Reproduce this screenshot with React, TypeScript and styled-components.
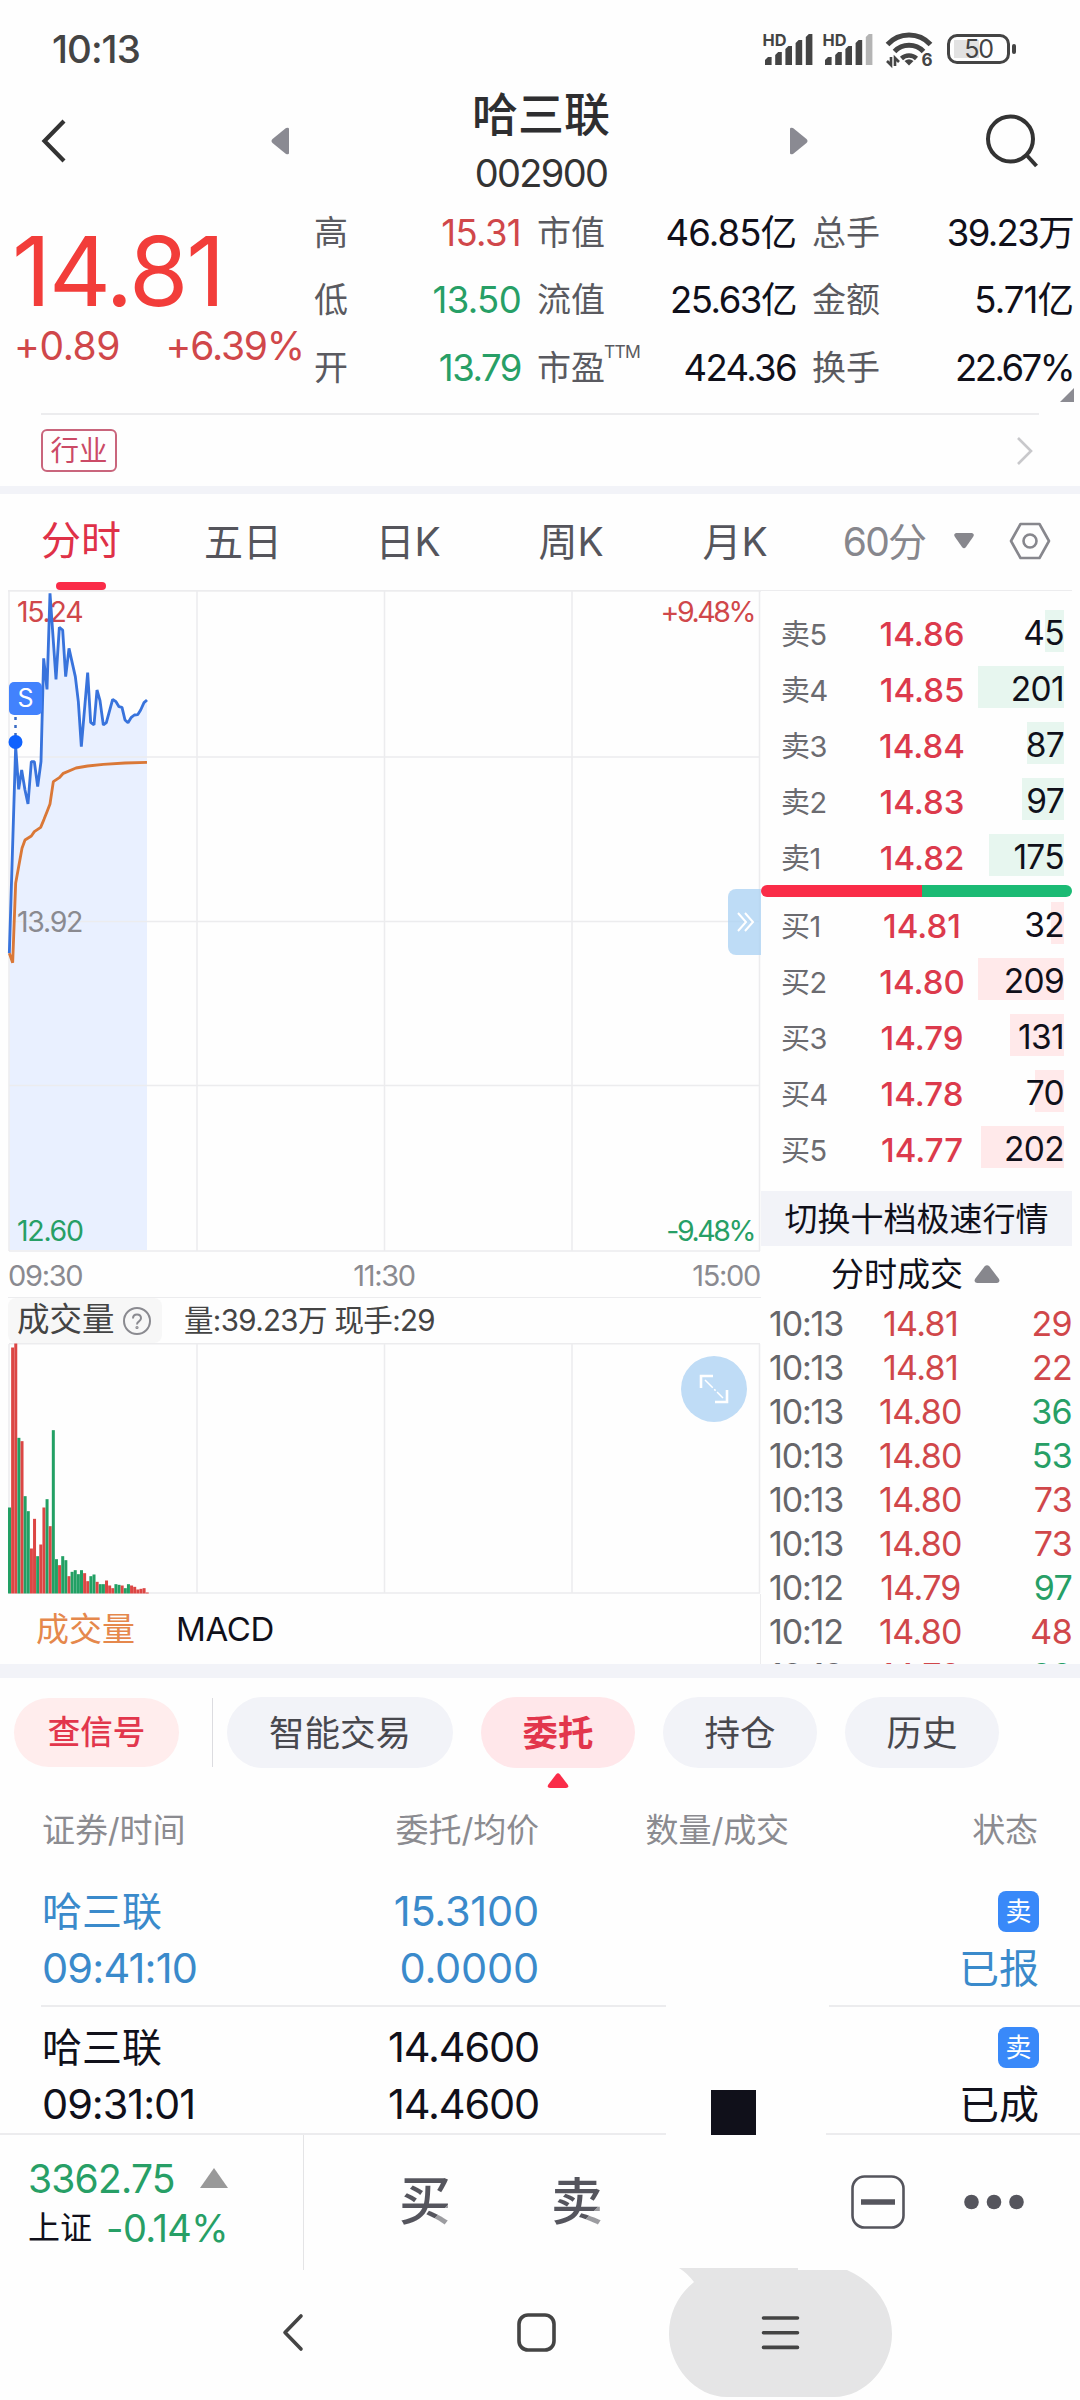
import React from "react";
import styled, { createGlobalStyle } from "styled-components";

const RED = "#d0474a";
const GREEN = "#279f66";
const INK = "#10101a";
const HAIR = "#ececee";
const BAND = "#f2f3f8";

const GlobalStyle = createGlobalStyle`
  * { box-sizing: border-box; }
  body { margin: 0; background: #fefefe; }
  svg { display: block; flex: none; overflow: visible; }
`;

const Screen = styled.div`
  width: 1080px;
  height: 2400px;
  overflow: hidden;
  display: flex;
  flex-direction: column;
  background: #fefefe;
  font-family: Inter, "Noto Sans CJK SC", sans-serif;
  line-height: 1;
  white-space: nowrap;
  color: ${INK};
`;

const Text = styled.span<{ $size: number; $color?: string; $weight?: number; $ls?: number; $lh?: number }>`
  font-size: ${(p) => p.$size}px;
  color: ${(p) => p.$color ?? "inherit"};
  font-weight: ${(p) => p.$weight ?? 400};
  letter-spacing: ${(p) => p.$ls ?? -0.045}em;
  line-height: ${(p) => (p.$lh ? p.$lh + "px" : 1)};
`;

/* ---------- status bar ---------- */
const StatusBar = styled.div`
  flex: none;
  height: 85px;
  padding: 13px 64px 0 52px;
  display: flex;
  align-items: center;
  justify-content: space-between;
  color: #444;
`;
const StatusIcons = styled.div`
  display: flex;
  align-items: center;
  gap: 12px;
`;
const Signals = styled.div`
  display: flex;
  gap: 10px;
`;
const BatteryBox = styled.div`
  width: 63px;
  height: 30px;
  border: 3px solid #444;
  border-radius: 10px;
  padding: 3px 4px;
  display: flex;
  align-items: center;
  justify-content: center;
  background: linear-gradient(#e2e2e2, #e2e2e2) 4px 50% / 25px 18px no-repeat;
`;
const Battery = styled.div`
  display: flex;
  align-items: center;
  gap: 2px;
  margin-left: 2px;
  &::after {
    content: "";
    width: 4px;
    height: 10px;
    border-radius: 2px;
    background: #444;
  }
`;

const Signal = ({ weak }: { weak?: boolean }) => (
  <svg width="50" height="34" viewBox="0 0 50 34">
    <text x="-0.500" y="13.500" fontSize="16.500" fontWeight="700" fill="#444" textLength="24" lengthAdjust="spacingAndGlyphs">HD</text>
    {[8, 13, 19, 25, 31].map((h, i) => (
      <path
        key={h}
        d={`M${2 + i * 10.2} 33V${36 - h}l3 -3h3.6V33z`}
        fill={weak && i === 4 ? "#b4b4b4" : "#444"}
      />
    ))}
  </svg>
);

const Wifi = () => (
  <svg width="48" height="36" viewBox="0 0 48 36" fill="none" stroke="#444" strokeWidth="5">
    <path d="M2.500 13.500a29 29 0 0 1 43 0" />
    <path d="M9.500 20.500a20 20 0 0 1 29 0" />
    <path d="M16.500 27.500a11 11 0 0 1 15 0" strokeWidth="4.500" />
    <path d="M24 34.500l-4.500-4.500q4.500-3.500 9 0z" fill="#444" stroke="none" />
    <path d="M6 26v8l-4-4M10 35v-8l4 4" strokeWidth="2.600" />
    <text x="36.500" y="35" fontSize="17" fontWeight="700" fill="#444" stroke="none">6</text>
  </svg>
);

/* ---------- stock header ---------- */
const Header = styled.header`
  flex: none;
  height: 111px;
  padding: 0 40px 0 42px;
  display: grid;
  grid-template-columns: 250px 1fr 250px;
  align-items: center;
`;
const HeaderSide = styled.div<{ $inset?: number }>`
  display: flex;
  align-items: center;
  justify-content: space-between;
  padding-right: ${(p) => p.$inset ?? 0}px;
`;
const TitleColumn = styled.div`
  display: flex;
  flex-direction: column;
  align-items: center;
  gap: 8px;
`;

/* ---------- quote ---------- */
const Quote = styled.section`
  position: relative;
  flex: none;
  height: 217px;
  display: flex;
`;
const PriceColumn = styled.div`
  width: 315px;
  padding: 25px 0 0 12px;
  display: flex;
  flex-direction: column;
`;
const ChangeRow = styled.div`
  display: flex;
  justify-content: space-between;
  padding: 0 11px 0 2px;
`;
const StatGrid = styled.div`
  display: grid;
  grid-template-columns: 207px 259px 261px;
  grid-auto-rows: 67.5px;
  column-gap: 16px;
  padding-top: 3px;
  margin-left: -1px;
`;
const StatCell = styled.div`
  display: flex;
  align-items: center;
  justify-content: space-between;
`;
const Superscript = styled.sup`
  font-size: 17.5px;
  line-height: 0;
  vertical-align: 22px;
  letter-spacing: -0.8px;
  margin-left: -1px;
`;
const Corner = styled.i`
  position: absolute;
  right: 6px;
  bottom: 11px;
  border-left: 14px solid transparent;
  border-bottom: 14px solid #8b8b92;
`;
const IndustryRow = styled.div`
  flex: none;
  height: 73px;
  margin: 0 41px;
  padding-right: 5px;
  border-top: 2px solid ${HAIR};
  display: flex;
  align-items: center;
  justify-content: space-between;
`;
const IndustryTag = styled.span`
  width: 76px;
  height: 43px;
  padding-top: 2px;
  display: flex;
  align-items: center;
  justify-content: center;
  border: 2px solid #c9657c;
  border-radius: 6px;
  color: #cb4a66;
  font-size: 28.5px;
`;
const Band = styled.div<{ $h: number }>`
  flex: none;
  height: ${(p) => p.$h}px;
  background: ${BAND};
`;

const stats: [string, string, string, number][] = [
  ["高", "15.31", RED, -0.018],
  ["市值", "46.85亿", INK, -0.025],
  ["总手", "39.23万", INK, -0.045],
  ["低", "13.50", GREEN, -0.018],
  ["流值", "25.63亿", INK, -0.04],
  ["金额", "5.71亿", INK, -0.025],
  ["开", "13.79", GREEN, -0.04],
  ["市盈", "424.36", INK, -0.045],
  ["换手", "22.67%", INK, -0.07],
];

/* ---------- period tabs ---------- */
const PeriodTabs = styled.nav`
  flex: none;
  height: 96px;
  display: grid;
  grid-template-columns: 162px 162px 168px 158px 170px 128px 32px 1fr;
`;
const PeriodTab = styled.div<{ $active?: boolean }>`
  position: relative;
  display: flex;
  align-items: center;
  justify-content: center;
  padding-bottom: 2px;
  font-size: ${(p) => (p.$active ? 40 : 39)}px;
  color: ${(p) => (p.$active ? "#df3148" : "#55555c")};
  ${(p) =>
    p.$active &&
    `&::after {
      content: "";
      position: absolute;
      left: 56px;
      bottom: 0;
      width: 50px;
      height: 8px;
      border-radius: 4px;
      background: #fa2c48;
    }`}
`;

/* ---------- chart area ---------- */
const Market = styled.main`
  flex: none;
  height: 1074px;
  display: flex;
  overflow: hidden;
`;
const ChartColumn = styled.div`
  width: 761px;
  display: flex;
  flex-direction: column;
`;
const ChartFrame = styled.div`
  position: relative;
`;
const ChartLabel = styled.span<{ $top: number; $right?: boolean; $color: string }>`
  position: absolute;
  top: ${(p) => p.$top}px;
  ${(p) => (p.$right ? "right: 7px;" : "left: 17px;")}
  font-size: 28.5px;
  line-height: 30px;
  letter-spacing: ${(p) => (p.$right ? -0.085 : -0.045)}em;
  color: ${(p) => p.$color};
`;
const SellMark = styled.span`
  position: absolute;
  left: 9px;
  top: 92px;
  width: 33px;
  height: 33px;
  border-radius: 5px;
  background: #4282fd;
  color: #fff;
  font-size: 25px;
  display: flex;
  align-items: center;
  justify-content: center;
`;
const ExpandTab = styled.span`
  position: absolute;
  right: 0;
  top: 299px;
  width: 33px;
  height: 66px;
  padding-left: 2px;
  border-radius: 8px 0 0 8px;
  background: rgba(170, 209, 243, 0.76);
  display: flex;
  align-items: center;
  justify-content: center;
`;
const TimeAxis = styled.div`
  height: 45px;
  padding: 2px 1px 0 8px;
  display: grid;
  grid-template-columns: 1fr auto 1fr;
  align-items: center;
  color: #8a8a90;
  > :last-child { justify-self: end; }
`;
const VolumeInfo = styled.div`
  height: 46px;
  margin-left: 8px;
  border-top: 1px solid ${HAIR};
  display: flex;
  align-items: center;
  gap: 22px;
  color: #444;
`;
const VolumeName = styled.div`
  width: 154px;
  height: 45px;
  padding-left: 9px;
  border-radius: 8px;
  background: #f7f7f7;
  display: flex;
  align-items: center;
  gap: 8px;
`;
const FullscreenButton = styled.span`
  position: absolute;
  right: 14px;
  top: 13px;
  width: 66px;
  height: 66px;
  border-radius: 50%;
  background: #bfdcf6;
  display: flex;
  align-items: center;
  justify-content: center;
`;
const IndicatorTabs = styled.div`
  height: 70px;
  padding: 1px 0 0 36px;
  border-right: 1px solid ${HAIR};
  display: flex;
  align-items: center;
  gap: 41px;
`;

const priceLine =
  "28,1120 47,500 56,628 65,570 75,630 84,672 94,545 103,545 113,620 123,545 131,235 141,328 150,40 168,298 178,142 188,150 197,290 207,205 226,290 235,365 244,500 263,278 272,427 282,435 291,330 300,362 310,435 319,428 338,358 348,365 357,380 366,382 375,420 384,428 394,412 403,405 413,404 422,390 432,368 441,360";
const averageLine =
  "28,1120 38,1148 47,910 66,805 75,780 94,768 103,755 122,742 132,718 141,695 150,672 160,605 178,593 190,580 228,564 263,558 310,553 375,549 441,547";

const PriceChart = () => (
  <svg width="761" height="662" viewBox="0 0 761 662" fill="none">
    <g transform="translate(0 -10) scale(0.33333)">
      <polygon points={`28,2010 ${priceLine} 441,2010`} fill="#e9f0ff" />
    </g>
    <path d="M8 .7H761" stroke={HAIR} strokeWidth="2" />
    <path d="M9 661H760M9 1V661M197 1V661M384.500 1V661M572 1V661M759.500 1V661M9 167H760M9 331.500H760M9 495.500H760" stroke={HAIR} strokeWidth="1.500" />
  </svg>
);
const PriceLines = styled.svg`
  position: absolute;
  left: 0;
  top: 0;
`;

const volumes =
  "258g 738r 750r 467g 457r 292g 247g 135r 224r 112g 147r 258r 283g 202r 490g 103g 85r 112g 100g 52r 65g 70g 58g 70g 61r 37r 52g 57g 35r 28g 28g 39r 24r 16r 28g 26g 24r 16g 28g 24r 20r 12r 14r 16r 3r".split(" ");

const VolumeChart = () => (
  <svg width="761" height="251" viewBox="0 0 761 251" fill="none">
    <path d="M9 .7H760M9 250H760M9 1V250M197 1V250M384.500 1V250M572 1V250M759.500 1V250" stroke={HAIR} strokeWidth="1.500" />
    {volumes.map((v, i) => {
      const h = parseInt(v, 10) / 3;
      return (
        <rect key={i} x={8 + i * 3.13} y={250.5 - h} width={3} height={h} fill={v.endsWith("r") ? "#dc4644" : "#22a064"} />
      );
    })}
  </svg>
);

/* ---------- order book ---------- */
const BookColumn = styled.aside`
  width: 311px;
  border-top: 1px solid ${HAIR};
  padding-top: 15px;
  display: flex;
  flex-direction: column;
`;
const BookRow = styled.div`
  flex: none;
  height: 56px;
  padding: 0 8px 0 20px;
  display: grid;
  grid-template-columns: 80px 117px 1fr;
  align-items: center;
`;
const Centered = styled.div<{ $shift?: number }>`
  display: flex;
  justify-content: center;
  padding-left: ${(p) => p.$shift ?? 0}px;
`;
const Quantity = styled.div<{ $bar: number; $fill: string }>`
  height: 48px;
  display: flex;
  align-items: center;
  justify-content: flex-end;
  background: linear-gradient(${(p) => p.$fill}, ${(p) => p.$fill}) 100% 0 / ${(p) => p.$bar}px 42px no-repeat;
`;
const Ratio = styled.div`
  flex: none;
  height: 12px;
  margin: -1px 0 1px;
  border-radius: 6px;
  background: linear-gradient(90deg, #fa2c48 161px, #1bba74 161px);
`;
const DepthSwitch = styled.div`
  flex: none;
  height: 55px;
  margin-top: 13px;
  padding-top: 1px;
  background: ${BAND};
  display: flex;
  align-items: center;
  justify-content: center;
`;
const TradesTitle = styled.div`
  flex: none;
  height: 56px;
  padding-left: 70px;
  display: flex;
  align-items: center;
  gap: 11px;
`;
const TradeRow = styled.div`
  flex: none;
  height: 44px;
  padding-left: 8px;
  display: grid;
  grid-template-columns: 90px 123px 1fr;
  align-items: center;
`;
const RightAligned = styled.div`
  display: flex;
  justify-content: flex-end;
`;

type Level = [string, string, string, number];
const asks: Level[] = [
  ["卖5", "14.86", "45", 19],
  ["卖4", "14.85", "201", 86],
  ["卖3", "14.84", "87", 37],
  ["卖2", "14.83", "97", 42],
  ["卖1", "14.82", "175", 75],
];
const bids: Level[] = [
  ["买1", "14.81", "32", 13],
  ["买2", "14.80", "209", 86],
  ["买3", "14.79", "131", 54],
  ["买4", "14.78", "70", 29],
  ["买5", "14.77", "202", 83],
];
const trades: [string, string, string, string][] = [
  ["10:13", "14.81", "29", RED],
  ["10:13", "14.81", "22", RED],
  ["10:13", "14.80", "36", GREEN],
  ["10:13", "14.80", "53", GREEN],
  ["10:13", "14.80", "73", RED],
  ["10:13", "14.80", "73", RED],
  ["10:12", "14.79", "97", GREEN],
  ["10:12", "14.80", "48", RED],
  ["10:12", "14.79", "20", GREEN],
];

const Levels = ({ rows, fill }: { rows: Level[]; fill: string }) => (
  <>
    {rows.map(([name, price, qty, bar]) => (
      <BookRow key={name}>
        <Text $size={29} $color="#6b6b70" $ls={-0.02}>{name}</Text>
        <Centered $shift={5}>
          <Text $size={33} $color="#dc3a4c" $ls={0} $weight={450}>{price}</Text>
        </Centered>
        <Quantity $bar={bar} $fill={fill}>
          <Text $size={33.5} $ls={-0.02}>{qty}</Text>
        </Quantity>
      </BookRow>
    ))}
  </>
);

/* ---------- orders ---------- */
const PillRow = styled.div`
  flex: none;
  height: 122px;
  padding: 19px 0 0 14px;
  display: flex;
  align-items: flex-start;
`;
const Pill = styled.div<{ $w: number; $gap?: number; $tone?: "soft" | "active" }>`
  position: relative;
  width: ${(p) => p.$w}px;
  height: ${(p) => (p.$tone === "soft" ? 69 : 71)}px;
  margin: ${(p) => (p.$tone === "soft" ? 1 : 0)}px 0 0 ${(p) => p.$gap ?? 28}px;
  padding-top: 2px;
  border-radius: 36px;
  display: flex;
  align-items: center;
  justify-content: center;
  font-size: ${(p) => (p.$tone === "soft" ? 32.5 : 35.5)}px;
  font-weight: ${(p) => (p.$tone === "active" ? 700 : p.$tone === "soft" ? 500 : 400)};
  color: ${(p) => (p.$tone ? "#e2364c" : "#48484e")};
  background: ${(p) => (p.$tone === "soft" ? "#ffeded" : p.$tone === "active" ? "#ffe7ea" : BAND)};
`;
const Separator = styled.i`
  width: 1px;
  height: 69px;
  margin: 1px 0 0 33px;
  background: #dcdce0;
`;
const Pointer = styled.svg`
  position: absolute;
  left: 66px;
  top: 76px;
`;
const OrderHead = styled.div`
  flex: none;
  height: 58px;
  padding: 3px 42px 0;
  display: grid;
  grid-template-columns: 300px 197px 250px 1fr;
  align-items: center;
  justify-items: end;
  font-size: 33px;
  letter-spacing: -0.1px;
  color: #8b8b90;
  > :first-child { justify-self: start; }
`;
const OrderItem = styled.div<{ $top: number; $h: number; $color: string; $gap: [number, number] }>`
  flex: none;
  height: ${(p) => p.$h}px;
  padding: ${(p) => p.$top}px 41px 0 42px;
  display: grid;
  grid-template-columns: 300px 197px 250px 1fr;
  grid-auto-rows: 57px;
  align-items: center;
  justify-items: end;
  color: ${(p) => p.$color};
  > :nth-child(4n + 1) { justify-self: start; }
  background:
    linear-gradient(${HAIR}, ${HAIR}) ${(p) => p.$gap[0]}px 100% / ${(p) => 666 - p.$gap[0]}px 2px no-repeat,
    linear-gradient(${HAIR}, ${HAIR}) 100% 100% / ${(p) => 1080 - p.$gap[1]}px 2px no-repeat;
`;
const SideBadge = styled.span`
  width: 41px;
  height: 41px;
  border-radius: 8px;
  background: #3989f9;
  color: #fff;
  font-size: 26px;
  display: flex;
  align-items: center;
  justify-content: center;
`;
const Block = styled.i`
  align-self: end;
  width: 45px;
  height: 45px;
  margin: 0 33px -2px 0;
  background: #10101a;
`;
const Empty = styled.i``;

/* ---------- bottom bars ---------- */
const ActionBar = styled.footer`
  flex: none;
  height: 135px;
  display: flex;
`;
const IndexBox = styled.div`
  width: 304px;
  border-right: 1px solid #e4e4e6;
  padding: 18px 0 0 28px;
`;
const IndexRow = styled.div<{ $gap: number }>`
  height: 50px;
  display: flex;
  align-items: center;
  gap: ${(p) => p.$gap}px;
`;
const Actions = styled.div`
  flex: 1;
  padding: 0 56px 2px 95px;
  display: flex;
  align-items: center;
`;
const ActionGlyph = styled.span`
  width: 52px;
  height: 52px;
  margin: 3px 100px 0 0;
  font-size: 52px;
  line-height: 50px;
  font-weight: 500;
  color: transparent;
  background: linear-gradient(135deg, #55555d 74%, #9c9ca0 74%);
  background-clip: text;
  -webkit-background-clip: text;
`;
const ActionIcons = styled.div`
  margin-left: auto;
  display: flex;
  align-items: center;
  gap: 59px;
`;
const NavBar = styled.div`
  flex: none;
  height: 130px;
`;
const NavIcons = styled.svg`
  margin-top: -2px;
`;

const Nav = () => (
  <NavIcons width="1080" height="132" viewBox="0 -2 1080 132" fill="none" stroke="#444" strokeWidth="3.600" strokeLinecap="round" strokeLinejoin="round">
    <path d="M679 -2H798V0H847C875 12 892 36 892 64C892 96 866 127 834 127H727C695 127 669 96 669 64C669 42 679 24 694 12Q687 3 679 -2Z" fill="#e5e5e6" stroke="none" />
    <path d="M301 46L285 62.500L301 79" />
    <rect x="519" y="45" width="35" height="35" rx="9" />
    <path d="M763.500 48H797.500M763.500 62.700H797.500M763.500 77.400H797.500" />
  </NavIcons>
);

export default function App() {
  return (
    <Screen>
      <GlobalStyle />
      <StatusBar>
        <Text $size={38.5} $weight={450} $ls={-0.025}>10:13</Text>
        <StatusIcons>
          <Signals>
            <Signal />
            <Signal weak />
          </Signals>
          <Wifi />
          <Battery>
            <BatteryBox>
              <Text $size={25}>50</Text>
            </BatteryBox>
          </Battery>
        </StatusIcons>
      </StatusBar>

      <Header>
        <HeaderSide $inset={3}>
          <svg width="26" height="46" viewBox="0 0 26 46" fill="none" stroke="#333" strokeWidth="4.200">
            <path d="M22 3L2.500 23L22 43" />
          </svg>
          <svg width="18" height="28" viewBox="0 0 18 28" fill="#8a8a92">
            <path d="M18 2V26Q18 28 15 27L1.500 16Q-.5 14 1.500 12L15 1Q18 0 18 2Z" />
          </svg>
        </HeaderSide>
        <TitleColumn>
          <Text $size={46} $lh={58} $weight={500} $color="#2e2e30" $ls={0}>哈三联</Text>
          <Text $size={38} $lh={45} $color="#333">002900</Text>
        </TitleColumn>
        <HeaderSide>
          <svg width="18" height="28" viewBox="0 0 18 28" fill="#8a8a92">
            <path d="M0 2V26Q0 28 3 27L16.500 16Q18.500 14 16.500 12L3 1Q0 0 0 2Z" />
          </svg>
          <svg width="54" height="54" viewBox="0 0 54 54" fill="none" stroke="#333" strokeWidth="4">
            <circle cx="24.500" cy="25" r="22.500" />
            <path d="M40.500 41L50.500 52" />
          </svg>
        </HeaderSide>
      </Header>

      <Quote>
        <PriceColumn>
          <Text $size={96} $lh={100} $color="#f23d3a" $ls={-0.022}>14.81</Text>
          <ChangeRow>
            <Text $size={39} $lh={50} $color={RED} $ls={-0.01}>+0.89</Text>
            <Text $size={39} $lh={50} $color={RED} $ls={-0.03}>+6.39%</Text>
          </ChangeRow>
        </PriceColumn>
        <StatGrid>
          {stats.map(([label, value, color, ls]) => (
            <StatCell key={label}>
              <Text $size={34} $color="#5a5a60" $ls={0}>
                {label}
                {label === "市盈" && <Superscript>TTM</Superscript>}
              </Text>
              <Text $size={36.5} $color={color} $ls={ls}>{value}</Text>
            </StatCell>
          ))}
        </StatGrid>
        <Corner />
      </Quote>
      <IndustryRow>
        <IndustryTag>行业</IndustryTag>
        <svg width="18" height="30" viewBox="0 0 18 30" fill="none" stroke="#c8c8cb" strokeWidth="2.600">
          <path d="M2 2L15 15L2 28" />
        </svg>
      </IndustryRow>
      <Band $h={8} />

      <PeriodTabs>
        <PeriodTab $active>分时</PeriodTab>
        <PeriodTab>五日</PeriodTab>
        <PeriodTab>日K</PeriodTab>
        <PeriodTab>周K</PeriodTab>
        <PeriodTab>月K</PeriodTab>
        <PeriodTab>
          <Text $size={39} $color="#87878d">60分</Text>
        </PeriodTab>
        <PeriodTab>
          <svg width="20" height="16" viewBox="0 0 20 16" fill="#87878d">
            <path d="M2 0H18Q21 1 19 4L12 14Q10 16.500 8 14L1 4Q-1 1 2 0Z" />
          </svg>
        </PeriodTab>
        <PeriodTab>
          <svg width="42" height="38" viewBox="0 0 42 38" fill="none" stroke="#87878d" strokeWidth="2.600" strokeLinejoin="round">
            <path d="M11.500 2H30.500L40 19L30.500 36H11.500L2 19Z" />
            <circle cx="21" cy="19" r="6.500" />
          </svg>
        </PeriodTab>
      </PeriodTabs>

      <Market>
        <ChartColumn>
          <ChartFrame>
            <PriceChart />
            <ChartLabel $top={7} $color={RED}>15.24</ChartLabel>
            <ChartLabel $top={7} $color={RED} $right>+9.48%</ChartLabel>
            <ChartLabel $top={317} $color="#8a8a90">13.92</ChartLabel>
            <ChartLabel $top={626} $color={GREEN}>12.60</ChartLabel>
            <ChartLabel $top={626} $color={GREEN} $right>-9.48%</ChartLabel>
            <PriceLines width="761" height="662" viewBox="0 0 761 662" fill="none">
              <g transform="translate(0 -10) scale(0.33333)" strokeLinejoin="bevel">
                <polyline points={priceLine} stroke="#3873dc" strokeWidth="8.500" />
                <polyline points={averageLine} stroke="#da7837" strokeWidth="8.500" />
              </g>
              <path d="M15.500 127V146" stroke="#3a6cc4" strokeWidth="2.500" strokeDasharray="3 5" />
              <circle cx="15.500" cy="152" r="7" fill="#0f62fe" />
            </PriceLines>
            <SellMark>S</SellMark>
            <ExpandTab>
              <svg width="18" height="20" viewBox="0 0 18 20" fill="none" stroke="#fff" strokeWidth="2">
                <path d="M1 1L9 10L1 19M8 1L16 10L8 19" />
              </svg>
            </ExpandTab>
          </ChartFrame>
          <TimeAxis>
            <Text $size={29}>09:30</Text>
            <Text $size={29}>11:30</Text>
            <Text $size={29}>15:00</Text>
          </TimeAxis>
          <VolumeInfo>
            <VolumeName>
              <Text $size={32.5} $ls={0}>成交量</Text>
              <svg width="28" height="28" viewBox="0 0 28 28" fill="none" stroke="#8a8a90" strokeWidth="2">
                <circle cx="14" cy="14" r="13" />
                <path d="M10 11.500Q10 7.500 14 7.500T18 11.300Q18 13 16 14.300T14 17.500" />
                <circle cx="14" cy="20.500" r=".6" />
              </svg>
            </VolumeName>
            <Text $size={29.5} $ls={-0.022}>量:39.23万 现手:29</Text>
          </VolumeInfo>
          <ChartFrame>
            <VolumeChart />
            <FullscreenButton>
              <svg width="30" height="30" viewBox="0 0 30 30" fill="none" stroke="#fff" strokeWidth="2.600">
                <path d="M2 14V2H14M28 16V28H16" />
                <path d="M6 6L24 24" strokeWidth="1.500" strokeDasharray="11 2 2 2" />
              </svg>
            </FullscreenButton>
          </ChartFrame>
          <IndicatorTabs>
            <Text $size={33} $color="#e5884c" $ls={0}>成交量</Text>
            <Text $size={33} $ls={-0.01}>MACD</Text>
          </IndicatorTabs>
        </ChartColumn>

        <BookColumn>
          <Levels rows={asks} fill="#e7f6ef" />
          <Ratio />
          <Levels rows={bids} fill="#ffe9ea" />
          <DepthSwitch>
            <Text $size={33} $ls={0}>切换十档极速行情</Text>
          </DepthSwitch>
          <TradesTitle>
            <Text $size={33} $ls={0}>分时成交</Text>
            <svg width="26" height="18" viewBox="0 0 26 18" fill="#87878d">
              <path d="M10.500 1.500Q13 -1 15.500 1.500L25 14Q26.500 17.500 23 18H3Q-.5 17.500 1 14Z" />
            </svg>
          </TradesTitle>
          {trades.map(([time, price, qty, color], i) => (
            <TradeRow key={i}>
              <Text $size={34} $color="#66666a" $ls={-0.035}>{time}</Text>
              <Centered>
                <Text $size={34} $color={RED} $ls={-0.02}>{price}</Text>
              </Centered>
              <RightAligned>
                <Text $size={34} $color={color} $ls={-0.02}>{qty}</Text>
              </RightAligned>
            </TradeRow>
          ))}
        </BookColumn>
      </Market>

      <Band $h={14} />
      <PillRow>
        <Pill $w={165} $gap={0} $tone="soft">查信号</Pill>
        <Separator />
        <Pill $w={226} $gap={14}>智能交易</Pill>
        <Pill $w={154} $tone="active">
          委托
          <Pointer width="22" height="15" viewBox="0 0 22 15" fill="#fa2c48">
            <path d="M9 1.500Q11 -1 13 1.500L21 12Q22 15 19 15H3Q0 15 1 12Z" />
          </Pointer>
        </Pill>
        <Pill $w={154}>持仓</Pill>
        <Pill $w={154}>历史</Pill>
      </PillRow>

      <OrderHead>
        <span>证券/时间</span>
        <span>委托/均价</span>
        <span>数量/成交</span>
        <span>状态</span>
      </OrderHead>
      <OrderItem $top={25} $h={149} $color="#3a8acb" $gap={[41, 829]}>
        <Text $size={40} $ls={0}>哈三联</Text>
        <Text $size={41.5} $ls={-0.005}>15.3100</Text>
        <Empty />
        <SideBadge>卖</SideBadge>
        <Text $size={41.5} $ls={-0.02}>09:41:10</Text>
        <Text $size={41.5} $ls={-0.005}>0.0000</Text>
        <Empty />
        <Text $size={40} $ls={0}>已报</Text>
      </OrderItem>
      <OrderItem $top={12} $h={128} $color={INK} $gap={[0, 826]}>
        <Text $size={40} $ls={0}>哈三联</Text>
        <Text $size={41.5} $ls={-0.028}>14.4600</Text>
        <Empty />
        <SideBadge>卖</SideBadge>
        <Text $size={41.5} $ls={-0.025}>09:31:01</Text>
        <Text $size={41.5} $ls={-0.028}>14.4600</Text>
        <Block />
        <Text $size={40} $ls={0}>已成</Text>
      </OrderItem>

      <ActionBar>
        <IndexBox>
          <IndexRow $gap={25}>
            <Text $size={39} $color={GREEN} $ls={-0.02}>3362.75</Text>
            <svg width="28" height="20" viewBox="0 0 28 20" fill="#999">
              <path d="M14 0L28 20H0Z" />
            </svg>
          </IndexRow>
          <IndexRow $gap={14}>
            <Text $size={32} $ls={0}>上证</Text>
            <Text $size={38} $color={GREEN} $ls={-0.015}>-0.14%</Text>
          </IndexRow>
        </IndexBox>
        <Actions>
          <ActionGlyph>买</ActionGlyph>
          <ActionGlyph>卖</ActionGlyph>
          <ActionIcons>
            <svg width="54" height="54" viewBox="0 0 54 54" fill="none" stroke="#55555d">
              <rect x="1.500" y="1.500" width="51" height="51" rx="12" strokeWidth="2.600" />
              <path d="M10 27H44" strokeWidth="5.500" />
            </svg>
            <svg width="60" height="16" viewBox="0 0 60 16" fill="#55555d">
              <circle cx="7.500" cy="8" r="7.300" />
              <circle cx="30" cy="8" r="7.300" />
              <circle cx="52.500" cy="8" r="7.300" />
            </svg>
          </ActionIcons>
        </Actions>
      </ActionBar>
      <NavBar>
        <Nav />
      </NavBar>
    </Screen>
  );
}
